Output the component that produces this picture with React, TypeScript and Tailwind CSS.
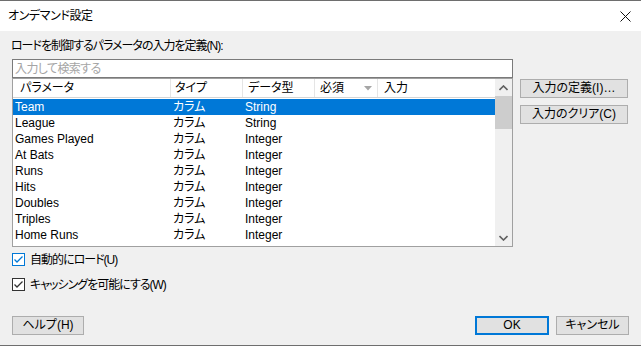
import React from 'react';

interface Param {
    name: string;
    kind: string;
    dataType: string;
}

const params: Param[] = [
    { name: 'Team', kind: 'カラム', dataType: 'String' },
    { name: 'League', kind: 'カラム', dataType: 'String' },
    { name: 'Games Played', kind: 'カラム', dataType: 'Integer' },
    { name: 'At Bats', kind: 'カラム', dataType: 'Integer' },
    { name: 'Runs', kind: 'カラム', dataType: 'Integer' },
    { name: 'Hits', kind: 'カラム', dataType: 'Integer' },
    { name: 'Doubles', kind: 'カラム', dataType: 'Integer' },
    { name: 'Triples', kind: 'カラム', dataType: 'Integer' },
    { name: 'Home Runs', kind: 'カラム', dataType: 'Integer' },
];

const font = "font-['Liberation_Sans','Noto_Sans_CJK_JP',sans-serif] [font-feature-settings:'palt']";

function CheckBox({ label, focused }: { label: string; focused?: boolean }) {
    const color = focused ? '#0078d7' : '#333333';
    return (
        <div className="flex items-center h-[13px]">
            <div className={`w-[13px] h-[13px] bg-white border ${focused ? 'border-[#0078d7]' : 'border-[#333333]'} flex items-center justify-center`}>
                <svg width="11" height="11" viewBox="0 0 11 11">
                    <path d="M1.5 5.5 L4 8 L9.5 2.5" fill="none" stroke={color} strokeWidth="1.3" />
                </svg>
            </div>
            <span className="ml-[5px] text-[12px] leading-[16px] text-black tracking-[-1px]">{label}</span>
        </div>
    );
}

function Button({ label, primary, className }: { label: string; primary?: boolean; className?: string }) {
    return (
        <button
            className={`h-[19px] bg-[#e1e1e1] text-[12px] leading-[15px] font-normal text-black flex items-center justify-center ${primary ? 'border-2 border-[#0078d7]' : 'border border-[#adadad]'} ${className ?? ''}`}
        >
            {label}
        </button>
    );
}

function App() {
    return (
        <div className={`w-[641px] h-[346px] flex flex-col bg-[#f0f0f0] border-t border-b border-[#6e6e6e] overflow-hidden ${font}`}>
            {/* title bar */}
            <div className="h-[30px] bg-white flex items-center justify-between pl-[8px] pr-[8px] shrink-0">
                <span className="text-[12px] text-black leading-[16px] tracking-[-0.4px]">オンデマンド設定</span>
                <svg width="11" height="11" viewBox="0 0 11 11" className="mr-[2px]">
                    <path d="M0.5 0.5 L10.5 10.5 M10.5 0.5 L0.5 10.5" stroke="#111" strokeWidth="1" />
                </svg>
            </div>

            <div className="flex flex-col px-[12px] pt-[7px] grow">
                <div className="text-[12px] leading-[16px] text-black -ml-[1px] tracking-[-1px]">ロードを制御するパラメータの入力を定義(N):</div>

                <div className="flex mt-[5px]">
                    <div className="w-[501px] flex flex-col">
                        <div className="h-[19px] bg-white border border-[#7a7a7a] flex items-center px-[2px] text-[12px] text-[#a5a5a5] tracking-[-0.6px]">
                            入力して検索する
                        </div>
                        <div className="h-[169px] bg-white border border-[#a0a0a0] flex">
                            <div className="flex flex-col w-[482px] overflow-hidden">
                                <div className="h-[19px] flex border-b border-[#d5d5d5] shrink-0 text-[12px] text-black">
                                    <div className="w-[158px] pl-[7px] flex items-center border-r border-[#e5e5e5]">パラメータ</div>
                                    <div className="w-[72px] pl-[4px] flex items-center border-r border-[#e5e5e5]">タイプ</div>
                                    <div className="w-[72px] pl-[5px] flex items-center border-r border-[#e5e5e5]">データ型</div>
                                    <div className="w-[63px] pl-[5px] pr-[5px] flex items-center justify-between border-r border-[#e5e5e5]">
                                        <span>必須</span>
                                        <svg width="8" height="5" viewBox="0 0 8 5"><path d="M0 0 H8 L4 4.5 Z" fill="#a6a6a6" /></svg>
                                    </div>
                                    <div className="grow pl-[6px] flex items-center">入力</div>
                                </div>
                                <div className="flex flex-col mt-[1px]">
                                    {params.map((p, i) => (
                                        <div
                                            key={p.name}
                                            className={`h-[16px] flex text-[12px] leading-[16px] ${i === 0 ? 'bg-[#0078d7] text-white' : 'text-black'}`}
                                        >
                                            <div className="w-[158px] pl-[2px] whitespace-nowrap">{p.name}</div>
                                            <div className="w-[72px] pl-[2px]">{p.kind}</div>
                                            <div className="w-[72px] pl-[2px]">{p.dataType}</div>
                                            <div className="grow"></div>
                                        </div>
                                    ))}
                                </div>
                            </div>
                            {/* scrollbar */}
                            <div className="w-[17px] bg-[#f0f0f0] flex flex-col">
                                <div className="h-[17px] flex items-center justify-center">
                                    <svg width="9" height="6" viewBox="0 0 9 6"><path d="M0.5 5 L4.5 1 L8.5 5" fill="none" stroke="#606060" strokeWidth="1.6" /></svg>
                                </div>
                                <div className="h-[33px] bg-[#cdcdcd]"></div>
                                <div className="grow"></div>
                                <div className="h-[17px] flex items-center justify-center">
                                    <svg width="9" height="6" viewBox="0 0 9 6"><path d="M0.5 1 L4.5 5 L8.5 1" fill="none" stroke="#606060" strokeWidth="1.6" /></svg>
                                </div>
                            </div>
                        </div>
                    </div>
                    <div className="flex flex-col ml-[7px] mt-[20px] gap-[7px]">
                        <Button label="入力の定義(I)…" className="w-[108px]" />
                        <Button label="入力のクリア(C)" className="w-[108px]" />
                    </div>
                </div>

                <div className="flex flex-col mt-[6px] gap-[12px]">
                    <CheckBox label="自動的にロード(U)" focused />
                    <CheckBox label="キャッシングを可能にする(W)" />
                </div>

                <div className="flex items-center mt-[25px]">
                    <Button label="ヘルプ(H)" className="w-[72px]" />
                    <div className="grow"></div>
                    <Button label="OK" primary className="w-[74px]" />
                    <Button label="キャンセル" className="w-[73px] ml-[7px]" />
                </div>
            </div>
        </div>
    );
}

export default App;
